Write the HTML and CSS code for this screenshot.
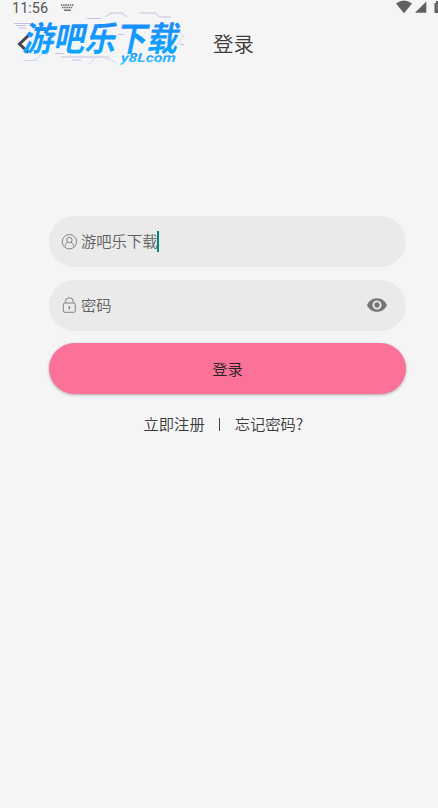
FILE: index.html
```html
<!DOCTYPE html>
<html lang="zh-CN">
  <head>
    <meta charset="UTF-8" />
    <meta name="viewport" content="width=device-width, initial-scale=1.0" />
    <title>登录</title>
    <link rel="stylesheet" href="styles.css">
  </head>
  <body>
    <div class="status-bar">
      <span class="time">11:56</span>
      <svg class="keyboard" width="13" height="8" viewBox="0 0 13 8">
        <path d="M0 1h13M1 3.5h11" stroke="#666" stroke-width="1.6" stroke-dasharray="1.5 .7" />
        <path d="M3 6.2h7" stroke="#666" stroke-width="1.4" />
      </svg>
      <svg class="signals" width="42" height="14" viewBox="0 0 42 14">
        <path d="M0 3.4Q8-2.6 16 3.4L8 13.2z" />
        <path d="M30.3 1.6v11.2H19z" />
        <path d="M38.5 3H40V1h2v12h-3.5z" />
        <path d="M40.5 5H42M40.5 8H42" stroke="#aaa" />
      </svg>
    </div>

    <header class="header">
      <svg class="back" width="13" height="20" viewBox="0 0 13 20">
        <path d="M11.5 1.5L2.5 10l9 8.5" fill="none" stroke="#444" stroke-width="3" />
      </svg>
      <h1>登录</h1>
      <svg class="logo" width="200" height="75" viewBox="0 0 200 75">
        <defs>
          <linearGradient id="blue" x1="0" y1="0" x2="0" y2="1">
            <stop offset="0.2" stop-color="#1b8cff" />
            <stop offset="1" stop-color="#08adff" />
          </linearGradient>
          <linearGradient id="cyan" x1="0" y1="0" x2="0" y2="1">
            <stop offset="0.2" stop-color="#168fff" />
            <stop offset="1" stop-color="#31cfff" />
          </linearGradient>
        </defs>
        <g class="logo-lines">
          <path d="M14 23.5h19M16 25.5h10M19 28h7M87 18.5h14M140 13h15l5 4h11M105 17l6-4h11l5 4M55 53.5h9M61 57h48M72 60h9M180 44.5h4M118 34.5h6" stroke="#b7b1e4" />
          <path d="M23 60.5h14M43 54l-9 6M52 49l-6 6M99 54l-10 10M105 59h5l6 4M184 36l-9 12M180 33l5 4M166 54l10-7" stroke="#bdd8f8" />
        </g>
        <text class="logo-name" x="0" y="0" transform="translate(22 51) skewX(-12)" textLength="155" lengthAdjust="spacingAndGlyphs">游吧乐下载</text>
        <text class="logo-url" x="0" y="0" transform="translate(120.5 61.5) skewX(-4)" textLength="55" lengthAdjust="spacingAndGlyphs">y8Lcom</text>
      </svg>
    </header>

    <main class="login">
      <div class="field">
        <svg class="field-icon" width="16" height="16" viewBox="0 0 16 16">
          <circle cx="8.4" cy="7.7" r="7.2" />
          <circle cx="8.4" cy="6" r="2.7" />
          <path d="M4.2 12.3c.3-2.3 1.4-3.6 2.7-4M12.6 12.3c-.3-2.3-1.4-3.6-2.7-4" />
        </svg>
        <span class="field-text">游吧乐下载</span>
        <span class="caret"></span>
      </div>
      <div class="field">
        <svg class="field-icon" width="16" height="16" viewBox="0 0 16 16">
          <rect x="2.3" y="6" width="12" height="9.3" rx="1.5" />
          <path d="M4.3 6V4.7a4 4 0 0 1 8 0V6M8.3 9.5v3" />
          <circle cx="8.3" cy="10.3" r=".6" />
        </svg>
        <span class="field-text">密码</span>
        <svg class="eye" width="20" height="14" viewBox="1 4.5 22 15">
          <path d="M12 4.5C7 4.5 2.73 7.61 1 12c1.73 4.39 6 7.5 11 7.5s9.27-3.11 11-7.5c-1.73-4.39-6-7.5-11-7.5zM12 17c-2.76 0-5-2.24-5-5s2.24-5 5-5 5 2.24 5 5-2.24 5-5 5zm0-8c-1.66 0-3 1.34-3 3s1.34 3 3 3 3-1.34 3-3-1.34-3-3-3z" />
        </svg>
      </div>
      <button class="btn" type="button">登录</button>
      <div class="links">
        <span>立即注册</span>
        <span class="divider"></span>
        <span>忘记密码?</span>
      </div>
    </main>
  </body>
</html>
```
FILE: styles.css
```css
* {
  box-sizing: border-box;
}
body {
  margin: 0;
  height: 808px;
  overflow: hidden;
  background-color: #f5f5f5;
  color: #3a3a3a;
  font-family: "Noto Sans CJK SC", sans-serif;
}
.status-bar {
  display: flex;
  height: 16px;
  padding-left: 12px;
}
.time {
  width: 49px;
  color: #555;
  font-family: Roboto, sans-serif;
  font-size: 14.5px;
  line-height: 17px;
}
.keyboard {
  margin-top: 4px;
}
.signals {
  margin-left: auto;
  fill: #606060;
}
.header {
  display: flex;
  align-items: center;
  height: 56px;
  padding-left: 17px;
}
.back {
  flex: none;
}
h1 {
  margin: 0 0 0 183px;
  padding-bottom: 2px;
  font-size: 20.4px;
  font-weight: 350;
  line-height: 30px;
}
/* logo lies over the back arrow */
.logo {
  position: absolute;
  top: 0;
  left: 0;
  overflow: visible;
}
.logo-lines path {
  fill: none;
  stroke-width: 0.8;
}
.logo-name {
  fill: url(#blue);
  font-size: 34px;
  font-weight: 700;
}
.logo-url {
  fill: url(#cyan);
  font-family: Roboto, sans-serif;
  font-size: 12.5px;
  font-style: italic;
  font-weight: 700;
}
.login {
  display: flex;
  flex-direction: column;
  gap: 12.7px;
  padding: 144px 32px 0 49px;
}
.field {
  display: flex;
  align-items: center;
  height: 51px;
  padding: 0 19px 0 12px;
  border-radius: 26px;
  background-color: #eaeaea;
}
.field-icon {
  margin-right: 4px;
  fill: none;
  stroke: #777;
  stroke-width: 0.9;
}
.field-text {
  padding-bottom: 2px;
  color: #606060;
  font-size: 15.3px;
  font-weight: 350;
  line-height: 22px;
}
.field-text:has(+ .caret) {
  padding-bottom: 3px;
}
.caret {
  width: 2px;
  height: 21px;
  margin-left: -1px;
  background-color: #008577;
}
.eye {
  margin-left: auto;
  fill: #757575;
}
.btn {
  height: 51px;
  padding: 0 0 2px;
  border: 0;
  border-radius: 26px;
  background-color: #fb7299;
  box-shadow: 0 1px 3px rgba(0, 0, 0, 0.3);
  color: #222;
  font-family: inherit;
  font-size: 15.3px;
  font-weight: 350;
}
.links {
  display: flex;
  align-items: center;
  margin-top: 5px;
  padding-left: 94.5px;
  font-size: 15.3px;
  font-weight: 350;
  line-height: 22px;
}
.divider {
  width: 1px;
  height: 13px;
  margin: 2px 14.5px 0 14.5px;
  background-color: #444;
}
```
